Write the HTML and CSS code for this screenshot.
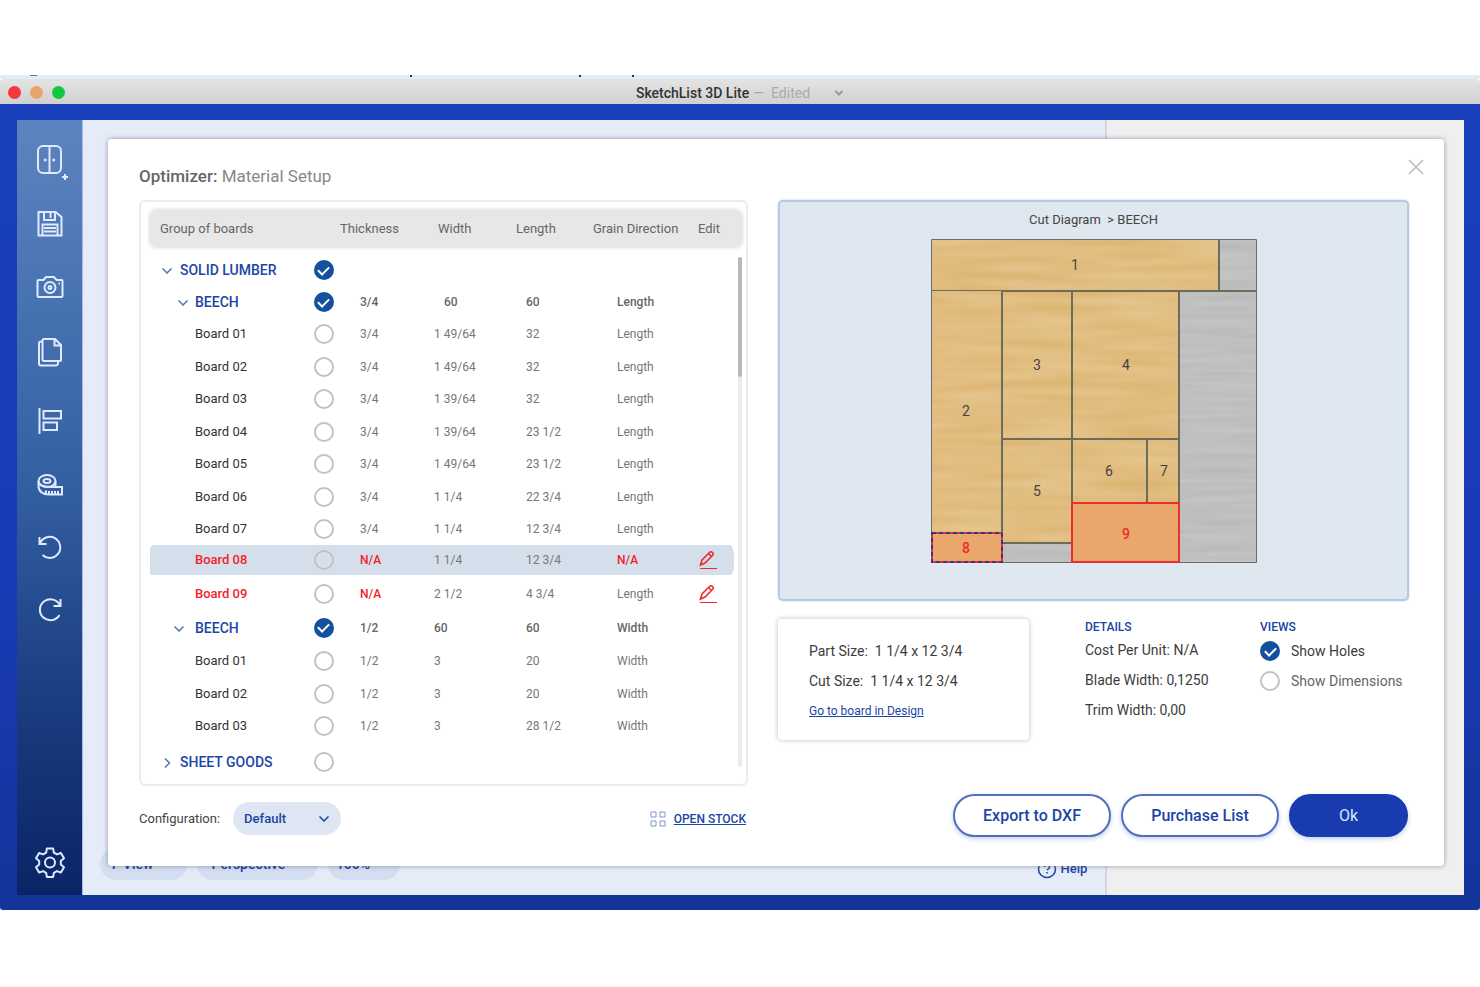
FILE: index.html
```html
<!DOCTYPE html>
<html lang="en">
<head>
<meta charset="utf-8">
<title>SketchList 3D Lite</title>
<link rel="stylesheet" href="styles.css">
</head>
<body>
<div class="window">
  <div class="desktop-strip"></div>
  <header class="titlebar">
    <div class="lights">
      <button class="light red" aria-label="Close window"></button>
      <button class="light amber" aria-label="Minimize window"></button>
      <button class="light green" aria-label="Zoom window"></button>
    </div>
    <div class="doc-title"><span>SketchList 3D Lite</span><span class="edited">—&nbsp; Edited</span>
      <svg width="10" height="6" viewBox="0 0 10 6"><path d="M1.500 1 5 4.500 8.500 1"/></svg>
    </div>
  </header>

  <div class="frame">
    <nav class="sidebar">
      <button aria-label="Add cabinet"><svg width="36" height="40" viewBox="0 0 36 40"><rect x="6" y="6" width="23" height="27" rx="5"/><path d="M17.500 6v27M30 37h6M33 34v6"/><path d="M12 20h2.500M20.500 20h2.500" stroke-width="2.500"/></svg></button>
      <button aria-label="Save"><svg width="36" height="40" viewBox="0 0 36 40"><path d="M6.500 8h17l6 5v18.500h-23zM12 8v8h11V8M18.500 9v5M10.500 31V20.500h15V31M12 24h12M12 27.500h12"/></svg></button>
      <button aria-label="Render image"><svg width="36" height="40" viewBox="0 0 36 40"><path d="M6.500 12h5l2.500-3h8l2.500 3h5q1 0 1 1v15q0 1-1 1h-23q-1 0-1-1V13q0-1 1-1z"/><circle cx="18" cy="19.500" r="5.500"/><circle cx="18" cy="19.500" r="1.500"/><path d="M26.500 15.500h1.500"/></svg></button>
      <button aria-label="Copy"><svg width="36" height="40" viewBox="0 0 36 40"><path d="M12 7h11l6 6v15q0 1-1 1H12q-1.500 0-1.500-1.500v-19Q10.500 7 12 7zM22.500 7v6.500H29M10 9.500H9q-2 0-2 2v20q0 2 2 2h14q3 0 3-2V30"/></svg></button>
      <button aria-label="Align"><svg width="36" height="40" viewBox="0 -5 36 40"><path d="M7.500 7v26M11.500 10H29v7.500H11.500zM11.500 21.500H25v7.500H11.500z"/></svg></button>
      <button aria-label="Measure"><svg width="36" height="40" viewBox="0 -6 36 40"><ellipse cx="15" cy="15" rx="8.500" ry="6"/><ellipse cx="15" cy="15" rx="3.500" ry="2"/><path d="M6.500 15v6q1 7 10.500 7.500h13V21H19q-8 0-11.500-3M23.500 15v5.500M14 28v-3.500M17 29v-4M20 29v-4M23 29v-4M26 29v-4"/></svg></button>
      <button aria-label="Undo"><svg width="36" height="40" viewBox="0 -4 36 40"><path d="M7.500 9v7h7M8 15.500A10.500 10.500 0 1 1 10.500 27"/></svg></button>
      <button aria-label="Redo"><svg width="36" height="40" viewBox="0 -2 36 40"><path d="M28.500 9v7h-7M28 15.500A10.500 10.500 0 1 0 27.500 25"/></svg></button>
      <button class="settings" aria-label="Settings"><svg width="36" height="40" viewBox="0 0 36 40"><path d="M14.900 6.500h6.200l.8 4.200 3 1.700 4-1.500 3.100 5.300-3.200 2.800v3.500l3.200 2.700-3.100 5.400-4-1.500-3 1.700-.8 4.200h-6.200l-.8-4.200-3-1.700-4 1.500L4 25.200l3.200-2.700V19L4 16.200l3.100-5.300 4 1.500 3-1.700z" stroke-linejoin="round"/><circle cx="18" cy="20.500" r="5"/></svg></button>
    </nav>
    <main class="workspace">
      <div class="view-bar">
        <button class="pill">F View</button>
        <button class="pill pill-wide">Perspective</button>
        <button class="pill pill-short">100%</button>
        <a class="help" href="#help"><svg width="20" height="20" viewBox="0 0 20 20"><circle cx="10" cy="10" r="8.500"/><path d="M7.500 8q0-2.500 2.500-2.500T12.500 8q0 1.500-2.500 3M10 13v1.500"/></svg>Help</a>
      </div>
    </main>
    <aside class="inspector"></aside>

    <section class="dialog" role="dialog" aria-labelledby="dialog-title">
      <header class="dialog-head">
        <h1 id="dialog-title"><b>Optimizer:</b> Material Setup</h1>
        <button class="close" aria-label="Close"><svg width="16" height="16" viewBox="0 0 16 16"><path d="M1 1l14 14M15 1 1 15"/></svg></button>
      </header>

      <div class="columns">
        <div class="left">
          <div class="boards">
            <table>
              <colgroup><col><col class="c-check"><col class="c-thick"><col class="c-width"><col class="c-length"><col class="c-grain"><col class="c-edit"></colgroup>
              <thead>
                <tr><th colspan="2">Group of boards</th><th>Thickness</th><th>Width</th><th>Length</th><th>Grain Direction</th><th>Edit</th></tr>
              </thead>
              <tbody>
                <tr class="group top"><td><button class="toggle" aria-label="Collapse SOLID LUMBER"><svg width="10" height="6" viewBox="0 0 10 6"><path d="M.5.500 5 5 9.500.500"/></svg></button><label for="solid">SOLID LUMBER</label></td><td><input type="checkbox" id="solid" checked></td><td></td><td></td><td></td><td></td><td></td></tr>
                <tr class="group sub"><td><button class="toggle" aria-label="Collapse BEECH 3/4"><svg width="10" height="6" viewBox="0 0 10 6"><path d="M.5.500 5 5 9.500.500"/></svg></button><label for="beech34">BEECH</label></td><td><input type="checkbox" id="beech34" checked></td><td>3/4</td><td class="inset">60</td><td>60</td><td>Length</td><td></td></tr>
                <tr><td><label for="a1">Board 01</label></td><td><input type="checkbox" id="a1"></td><td>3/4</td><td>1 49/64</td><td>32</td><td>Length</td><td></td></tr>
                <tr><td><label for="a2">Board 02</label></td><td><input type="checkbox" id="a2"></td><td>3/4</td><td>1 49/64</td><td>32</td><td>Length</td><td></td></tr>
                <tr><td><label for="a3">Board 03</label></td><td><input type="checkbox" id="a3"></td><td>3/4</td><td>1 39/64</td><td>32</td><td>Length</td><td></td></tr>
                <tr><td><label for="a4">Board 04</label></td><td><input type="checkbox" id="a4"></td><td>3/4</td><td>1 39/64</td><td>23 1/2</td><td>Length</td><td></td></tr>
                <tr><td><label for="a5">Board 05</label></td><td><input type="checkbox" id="a5"></td><td>3/4</td><td>1 49/64</td><td>23 1/2</td><td>Length</td><td></td></tr>
                <tr><td><label for="a6">Board 06</label></td><td><input type="checkbox" id="a6"></td><td>3/4</td><td>1 1/4</td><td>22 3/4</td><td>Length</td><td></td></tr>
                <tr><td><label for="a7">Board 07</label></td><td><input type="checkbox" id="a7"></td><td>3/4</td><td>1 1/4</td><td>12 3/4</td><td>Length</td><td></td></tr>
                <tr class="selected"><td class="bad"><label for="a8">Board 08</label></td><td><input type="checkbox" id="a8"></td><td class="bad">N/A</td><td>1 1/4</td><td>12 3/4</td><td class="bad">N/A</td><td><button class="edit" aria-label="Edit Board 08"><svg width="20" height="20" viewBox="0 0 20 20"><path d="M2.500 15 4 10l7.500-7.500q1.500-1.500 3 0t0 3L7 13zM10.500 3.500l3 3" stroke-width="1.600"/><path d="M2 18.500h17"/></svg></button></td></tr>
                <tr><td class="bad"><label for="a9">Board 09</label></td><td><input type="checkbox" id="a9"></td><td class="bad">N/A</td><td>2 1/2</td><td>4 3/4</td><td>Length</td><td><button class="edit" aria-label="Edit Board 09"><svg width="20" height="20" viewBox="0 0 20 20"><path d="M2.500 15 4 10l7.500-7.500q1.500-1.500 3 0t0 3L7 13zM10.500 3.500l3 3" stroke-width="1.600"/><path d="M2 18.500h17"/></svg></button></td></tr>
                <tr class="group sub second"><td><button class="toggle" aria-label="Collapse BEECH 1/2"><svg width="10" height="6" viewBox="0 0 10 6"><path d="M.5.500 5 5 9.500.500"/></svg></button><label for="beech12">BEECH</label></td><td><input type="checkbox" id="beech12" checked></td><td>1/2</td><td>60</td><td>60</td><td>Width</td><td></td></tr>
                <tr><td><label for="b1">Board 01</label></td><td><input type="checkbox" id="b1"></td><td>1/2</td><td>3</td><td>20</td><td>Width</td><td></td></tr>
                <tr><td><label for="b2">Board 02</label></td><td><input type="checkbox" id="b2"></td><td>1/2</td><td>3</td><td>20</td><td>Width</td><td></td></tr>
                <tr><td><label for="b3">Board 03</label></td><td><input type="checkbox" id="b3"></td><td>1/2</td><td>3</td><td>28 1/2</td><td>Width</td><td></td></tr>
                <tr class="group last"><td><button class="toggle" aria-label="Expand SHEET GOODS"><svg width="10" height="10" viewBox="0 0 10 10"><path d="M3 .5 7.500 5 3 9.500"/></svg></button><label for="sheet">SHEET GOODS</label></td><td><input type="checkbox" id="sheet"></td><td></td><td></td><td></td><td></td><td></td></tr>
              </tbody>
            </table>
            <div class="scrollbar"><div class="thumb"></div></div>
          </div>
          <div class="under">
            <label for="config">Configuration:</label>
            <span class="select-wrap"><select id="config"><option>Default</option></select><svg width="10" height="6" viewBox="0 0 10 6"><path d="M.5.500 5 5 9.500.500"/></svg></span>
            <a class="stock" href="#stock"><svg width="16" height="16" viewBox="0 0 16 16"><path d="M1 1h5v5H1zM10 1h5v5h-5zM1 10h5v5H1zM10 10h5v5h-5z"/></svg><span>OPEN STOCK</span></a>
          </div>
        </div>

        <div class="right">
          <div class="diagram">
            <h2>Cut Diagram &nbsp;&gt; BEECH</h2>
            <svg class="sheet" width="326" height="324" viewBox="0 0 326 324">
              <defs>
                <filter id="wood" x="0" y="0" width="100%" height="100%" color-interpolation-filters="sRGB">
                  <feTurbulence type="fractalNoise" baseFrequency="0.012 0.12" numOctaves="1" seed="4"/>
                  <feColorMatrix values="0.06 0 0 0 0.852  0.11 0 0 0 0.686  0.18 0 0 0 0.410  0 0 0 0 1"/>
                </filter>
                <filter id="waste" x="0" y="0" width="100%" height="100%" color-interpolation-filters="sRGB">
                  <feTurbulence type="fractalNoise" baseFrequency="0.012 0.200" numOctaves="1" seed="9"/>
                  <feColorMatrix values="0.08 0 0 0 0.710  0.08 0 0 0 0.710  0.08 0 0 0 0.710  0 0 0 0 1"/>
                </filter>
              </defs>
              <rect x="1" y="1" width="248" height="322" filter="url(#wood)"/>
              <rect x="1" y="1" width="287" height="51" filter="url(#wood)"/>
              <rect x="288" y="1" width="37" height="51" filter="url(#waste)"/>
              <rect x="248" y="52" width="77" height="271" filter="url(#waste)"/>
              <rect x="71" y="304" width="70" height="19" filter="url(#waste)"/>
              <g class="outline"><path d="M.5.500h325v323H.5zM0 51.500h72"/></g>
              <g class="cuts"><path d="M70 52h255M288 1v51M71 52v271M141 52v212M248 52v271M71 200h177M216 200v64M71 304h70"/></g>
              <rect x="1" y="294" width="70" height="29" class="flag"/>
              <rect x="1" y="294" width="70" height="29" class="marching"/>
              <rect x="141" y="264" width="107" height="59" class="flag"/>
              <g class="nums">
                <text x="144" y="31">1</text><text x="35" y="177">2</text><text x="106" y="131">3</text><text x="195" y="131">4</text><text x="106" y="257">5</text><text x="178" y="237">6</text><text x="233" y="237">7</text>
                <text class="hot" x="35" y="314">8</text><text class="hot" x="195" y="300">9</text>
              </g>
            </svg>
          </div>

          <div class="info">
            <div class="part">
              <p>Part Size: &nbsp;1 1/4 x 12 3/4</p>
              <p>Cut Size: &nbsp;1 1/4 x 12 3/4</p>
              <a href="#board">Go to board in Design</a>
            </div>
            <div class="details">
              <h3>DETAILS</h3>
              <p>Cost Per Unit: N/A</p>
              <p>Blade Width: 0,1250</p>
              <p>Trim Width: 0,00</p>
            </div>
            <div class="views">
              <h3>VIEWS</h3>
              <div class="option"><input type="checkbox" id="holes" checked><label for="holes">Show Holes</label></div>
              <div class="option"><input type="checkbox" id="dims"><label class="dim" for="dims">Show Dimensions</label></div>
            </div>
          </div>

          <div class="actions">
            <button class="btn">Export to DXF</button>
            <button class="btn">Purchase List</button>
            <button class="btn primary">Ok</button>
          </div>
        </div>
      </div>
    </section>
  </div>
</div>
</body>
</html>
```
FILE: styles.css
```css
* { box-sizing: border-box; }
body { margin: 0; padding-top: 75px; background: #fff; font: 13px/16px Roboto, "Liberation Sans", sans-serif; color: #444; }
h1, h2, h3, p { margin: 0; font-weight: 400; }
button { border: 0; padding: 0; background: none; font: inherit; color: inherit; }
svg { display: block; fill: none; stroke: currentColor; }
a { color: #1b45a6; }

.desktop-strip {
  height: 4px;
  background:
    linear-gradient(#777, #777) 30px 0 / 7px 1px no-repeat,
    linear-gradient(#333, #333) 410px 0 / 2px 2px no-repeat,
    linear-gradient(#333, #333) 579px 0 / 2px 2px no-repeat,
    linear-gradient(#333, #333) 632px 0 / 2px 2px no-repeat,
    #e3ebf5;
}
.titlebar { position: relative; display: flex; align-items: center; justify-content: center; height: 25px; padding-top: 3px; background: linear-gradient(#e4e4e4, #d0d0d0); border-radius: 4px 4px 0 0; }
.lights { position: absolute; left: 8px; top: 7px; display: flex; gap: 9px; }
.light { width: 13px; height: 13px; border-radius: 50%; }
.red { background: #f4373c; }
.amber { background: #e8a567; }
.green { background: #0fca3c; }
.doc-title { display: flex; align-items: center; gap: 4px; color: #333; font-size: 14px; font-weight: 500; }
.doc-title .edited { color: #aaa; font-weight: 400; }
.doc-title svg { margin-left: 20px; color: #999; stroke-width: 2; }

.frame { position: relative; display: flex; min-height: 806px; padding: 16px 16px 15px 17px; background: linear-gradient(#193fba, #193bb5 60%, #12349a); border-radius: 0 0 3px 3px; }
.sidebar { display: flex; flex-direction: column; align-items: center; gap: 24px; width: 66px; padding: 20px 0 13px; background: linear-gradient(#5c84c0, #4671b1 25%, #315c9f 50%, #1a3c80 75%, #0a2467); border-right: 1px solid #a6b9df; color: #e0eaff; stroke-width: 2; }
.sidebar svg { overflow: visible; }
.settings { margin-top: auto; }
.workspace { flex: 1023; display: flex; flex-direction: column; justify-content: flex-end; background: #e6ecf7; }
.inspector { flex: 357; background: #efefef; border-left: 2px solid #d3d7e0; }
.view-bar { display: flex; gap: 10px; padding: 0 18px 15px 17px; color: #1b45a6; font-size: 14px; font-weight: 500; }
.pill { width: 87px; height: 32px; border-radius: 16px; background: #d3dff0; padding-right: 22px; }
.pill-wide { width: 121px; padding-right: 18px; }
.pill-short { width: 72px; }
.help { display: flex; align-items: center; gap: 3px; margin-left: auto; padding-top: 10px; font-size: 13px; text-decoration: none; }
.help svg { stroke-width: 1.5; }

.dialog { position: absolute; inset: 35px 36px 44px 108px; padding: 20px 35px 28px 31px; background: #fff; border-radius: 4px; box-shadow: 0 0 5px rgba(60, 70, 90, .5); }
.dialog-head { display: flex; justify-content: space-between; height: 41px; }
.dialog h1 { padding-top: 7px; font-size: 17px; line-height: 20px; color: #888; }
.dialog h1 b { font-weight: 500; color: #666; }
.close { width: 16px; height: 16px; margin-right: -15px; color: #bbb; stroke-width: 1.5; }
.columns { display: grid; grid-template-columns: 609fr 631fr; gap: 30px; }

.boards { position: relative; height: 586px; padding: 8px 4px 0 9px; border: 2px solid #ececec; border-radius: 6px; }
table { width: 100%; table-layout: fixed; border-collapse: separate; border-spacing: 0; color: #777; }
.c-check { width: 27px; }
.c-thick { width: 94px; }
.c-width { width: 82px; }
.c-length { width: 77px; }
.c-grain { width: 105px; }
.c-edit { width: 44px; }
thead tr { border-radius: 6px; box-shadow: 0 0 4px #ccc; }
th { height: 37px; padding: 0; background: #e7e7e7; text-align: left; font-weight: 400; color: #666; }
th:first-child { padding-left: 10px; border-radius: 6px 0 0 6px; }
th:last-child { border-radius: 0 6px 6px 0; }
th:nth-child(2) { padding-left: 0; }
th:nth-child(3) { padding-left: 4px; }
td { height: 32px; padding: 0; white-space: nowrap; font-size: 12px; }
tr:nth-child(even) td { height: 33px; }
td:first-child { padding-left: 45px; color: #333; font-size: 13px; }
td:nth-child(3) { padding-left: 20px; }
td:nth-child(5) { padding-left: 10px; }
td:nth-child(6) { padding-left: 24px; }
td:last-child { border-right: 8px solid transparent; background-clip: padding-box; }
td.inset { padding-left: 10px; }
.group td { font-weight: 500; color: #666; }
.group.sub td { height: 32px; }
.group.second td { height: 35px; }
.group.top td { height: 39px; padding-top: 7px; }
.group.last td { height: 40px; }
.group td:first-child { color: #1b45a6; padding-left: 12px; font-size: 14px; }
.group.sub td:first-child { padding-left: 28px; }
.group.second td:first-child { padding-left: 24px; }
.toggle { width: 10px; margin-right: 8px; vertical-align: middle; color: #5573b5; stroke-width: 1.5; }
.sub .toggle { margin-right: 7px; }
.second .toggle { margin-right: 11px; }
.selected td { background: #d5dfec; background-clip: padding-box; border-bottom: 3px solid transparent; }
.selected td:first-child { border-radius: 4px 0 0 4px; }
.selected td:last-child { border-radius: 0 12px 12px 0; }
td.bad, td.bad:first-child { color: #f02328; font-weight: 500; }
.edit { display: block; color: #ee2b30; }

input[type="checkbox"] { appearance: none; display: grid; place-items: center; width: 20px; height: 20px; margin: 0; border: 2px solid #c2c2c2; border-radius: 50%; background: #fff; }
td input[type="checkbox"] { margin-left: 1px; }
.selected input[type="checkbox"] { background: none; }
input[type="checkbox"]:checked { border: 0; background: #14509c; }
input[type="checkbox"]:checked::after { content: ""; width: 9px; height: 5px; margin-bottom: 2px; border: solid #fff; border-width: 0 0 2px 2px; transform: rotate(-45deg); }

.scrollbar { position: absolute; top: 55px; right: 4px; bottom: 17px; width: 4px; border-radius: 2px; background: #ebebeb; }
.thumb { height: 120px; border-radius: 2px; background: #b9b9b9; }

.under { display: flex; align-items: center; margin-top: 16px; padding-right: 2px; color: #444; }
.select-wrap { position: relative; margin-left: 13px; color: #1b45a6; }
.select-wrap svg { position: absolute; right: 12px; top: 14px; stroke-width: 1.5; pointer-events: none; }
select { appearance: none; width: 108px; height: 33px; padding: 0 11px; border: 0; border-radius: 17px; background: #dde6f2; color: #1b45a6; font: 500 13px Roboto, "Liberation Sans", sans-serif; }
.stock { display: flex; align-items: center; gap: 8px; margin-left: auto; font-size: 12px; font-weight: 500; text-decoration: none; }
.stock svg { color: #7d97cc; }
.stock span { text-decoration: underline; }

.diagram { display: flex; flex-direction: column; align-items: center; height: 401px; padding-top: 10px; background: #dfe7f1; border: 2px solid #b8c9e6; border-radius: 5px; box-shadow: 0 0 2px #b8c9e6; }
.diagram h2 { margin-bottom: 11px; font-size: 13px; line-height: 16px; }
.sheet { margin-left: 1px; }
.outline { stroke: #6c6c64; }
.cuts { stroke: #6c6c5c; stroke-width: 2; }
.flag { fill: #e9a76b; stroke: #ee2b30; stroke-width: 2; }
.marching { stroke: #2f3a86; stroke-width: 2; stroke-dasharray: 4 3; }
.nums { fill: #444; stroke: none; font-size: 14px; text-anchor: middle; }
.nums .hot { fill: #ee2b30; font-weight: 500; }

.info { display: flex; align-items: flex-start; margin-top: 18px; color: #3c3c3c; font-size: 14px; }
.part { width: 251px; height: 121px; padding: 24px 31px; border-radius: 4px; box-shadow: 0 0 5px #bbb; }
.part p { margin-bottom: 14px; }
.part a { display: block; font-size: 12px; }
.details { width: 175px; margin-left: 56px; }
.info h3 { margin-bottom: 7px; font-size: 12px; font-weight: 500; color: #1b45a6; }
.details p { margin-bottom: 14px; }
.option { display: flex; align-items: center; gap: 11px; height: 20px; margin-bottom: 10px; }
.views h3 { margin-bottom: 6px; }
.dim { color: #666; }

.actions { display: flex; justify-content: flex-end; gap: 10px; margin-top: 54px; padding-right: 1px; }
.btn { width: 158px; height: 43px; border: 2px solid #4f6fbd; border-radius: 22px; background: #fff; color: #1b45a6; font-size: 16px; font-weight: 500; box-shadow: 0 2px 5px #c3cfea; }
.btn.primary { width: 119px; background: #193bb0; border-color: #193bb0; color: #dbe5ff; font-weight: 400; }
```
